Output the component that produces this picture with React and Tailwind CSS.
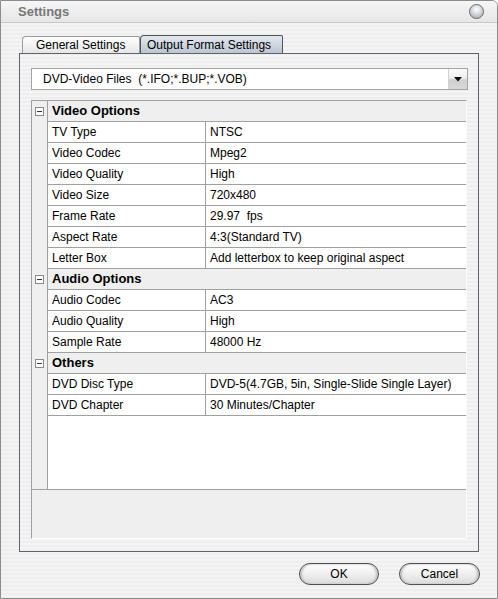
import React from "react";

const video = [
  ["TV Type", "NTSC"],
  ["Video Codec", "Mpeg2"],
  ["Video Quality", "High"],
  ["Video Size", "720x480"],
  ["Frame Rate", "29.97  fps"],
  ["Aspect Rate", "4:3(Standard TV)"],
  ["Letter Box", "Add letterbox to keep original aspect"],
];
const audio = [
  ["Audio Codec", "AC3"],
  ["Audio Quality", "High"],
  ["Sample Rate", "48000 Hz"],
];
const others = [
  ["DVD Disc Type", "DVD-5(4.7GB, 5in, Single-Slide Single Layer)"],
  ["DVD Chapter", "30 Minutes/Chapter"],
];

function Header({ title }) {
  return (
    <div className="flex h-[21px]">
      <div className="w-[16px] shrink-0 border-r border-[#a0a0a0] bg-[#efefef] flex items-center justify-center">
        <div className="w-[9px] h-[9px] border border-[#8a8a8a] bg-white flex items-center justify-center">
          <div className="w-[5px] h-px bg-[#333]" />
        </div>
      </div>
      <div className="flex-1 bg-[#efefef] border-b border-[#a0a0a0] flex items-center pl-[4px] font-bold text-[13px] text-black">
        {title}
      </div>
    </div>
  );
}

function Row({ name, value }) {
  return (
    <div className="flex h-[21px]">
      <div className="w-[16px] shrink-0 border-r border-[#a0a0a0] bg-[#efefef]" />
      <div className="flex-1 flex border-b border-[#a0a0a0] bg-white">
        <div className="w-[158px] shrink-0 border-r border-[#a0a0a0] flex items-center pl-[4px] whitespace-pre">
          {name}
        </div>
        <div className="flex-1 flex items-center pl-[4px] whitespace-pre">{value}</div>
      </div>
    </div>
  );
}

function Btn({ label, w }) {
  return (
    <div
      className={`${w} h-[22px] rounded-full border border-[#4f4f4f] bg-[linear-gradient(180deg,#ffffff_0%,#f1f1f1_45%,#dcdcdc_100%)] shadow-[inset_2px_0_2px_#c4c4c4,inset_-2px_0_2px_#c4c4c4] flex items-center justify-center text-[12px] text-black`}
    >
      {label}
    </div>
  );
}

export default function App() {
  return (
    <div className="w-[498px] h-[599px] flex flex-col border border-[#8c8c8c] rounded-tr-[6px] overflow-hidden bg-[repeating-linear-gradient(180deg,#eeeeee_0px,#eeeeee_2px,#f4f4f4_2px,#f4f4f4_4px)] font-['Liberation_Sans',Arial,sans-serif] text-[12px] text-black">
      {/* title bar */}
      <div className="h-[22px] shrink-0 flex items-center border-b border-[#c8c8c8] bg-[linear-gradient(180deg,#f6f6f6,#e6e6e6)] pl-[17px] pr-[13px]">
        <span className="font-bold text-[13px] text-[#777777]">Settings</span>
        <div className="ml-auto w-[15px] h-[15px] rounded-full border border-[#6b6b6b] bg-[radial-gradient(circle_at_50%_35%,#ffffff_0%,#d4d8dd_45%,#9aa1aa_100%)]" />
      </div>

      <div className="flex-1 flex flex-col px-[18px] pt-[12px]">
        {/* tabs */}
        <div className="h-[18px] flex items-end pl-[3px]">
          <div className="w-[118px] h-[17px] border border-b-0 border-[#9a9a9a] rounded-tl-[4px] rounded-tr-[2px] bg-[linear-gradient(180deg,#ffffff,#e6e6e6)] flex items-center pl-[13px] text-[12px]">
            General Settings
          </div>
          <div className="w-[143px] h-[18px] border border-b-0 border-[#4e545c] rounded-tl-[4px] rounded-tr-[2px] bg-[linear-gradient(180deg,#e3e8ee,#bcc6d2)] flex items-center pl-[6px] text-[12px]">
            Output Format Settings
          </div>
        </div>

        {/* panel */}
        <div className="h-[499px] border border-[#5d636b] flex flex-col pt-[14px] pl-[11px] pr-[10px] pb-[12px]">
          {/* dropdown */}
          <div className="h-[22px] w-[437px] border border-[#a4a4a4] bg-white flex">
            <div className="flex-1 flex items-center pl-[11px] whitespace-pre">
              DVD-Video Files  (*.IFO;*.BUP;*.VOB)
            </div>
            <div className="w-[19px] border-l border-[#d0d0d0] bg-[linear-gradient(180deg,#fbfbfb_0%,#f0f0f0_45%,#cfcfcf_55%,#d8d8d8_100%)] flex items-center justify-center">
              <svg width="8" height="5" viewBox="0 0 8 5">
                <path d="M0 0H8L4 4.5Z" fill="#111" />
              </svg>
            </div>
          </div>

          {/* property grid */}
          <div className="mt-[10px] w-[436px] h-[439px] flex flex-col border-t border-l border-[#a0a0a0] border-r border-r-[#fbfbfb] border-b border-b-white">
            <div className="h-[388px] flex flex-col">
              <Header title="Video Options" />
              {video.map(([n, v]) => (
                <Row key={n} name={n} value={v} />
              ))}
              <Header title="Audio Options" />
              {audio.map(([n, v]) => (
                <Row key={n} name={n} value={v} />
              ))}
              <Header title="Others" />
              {others.map(([n, v]) => (
                <Row key={n} name={n} value={v} />
              ))}
              <div className="flex-1 flex">
                <div className="w-[16px] shrink-0 border-r border-[#a0a0a0] bg-[#efefef]" />
                <div className="flex-1 bg-white" />
              </div>
            </div>
            <div className="flex-1 border-t border-[#a0a0a0] bg-[#efefef]" />
          </div>
        </div>

        {/* buttons */}
        <div className="mt-[11px] flex justify-end gap-[20px] -mr-px">
          <Btn label="OK" w="w-[80px]" />
          <Btn label="Cancel" w="w-[81px]" />
        </div>
      </div>
    </div>
  );
}
